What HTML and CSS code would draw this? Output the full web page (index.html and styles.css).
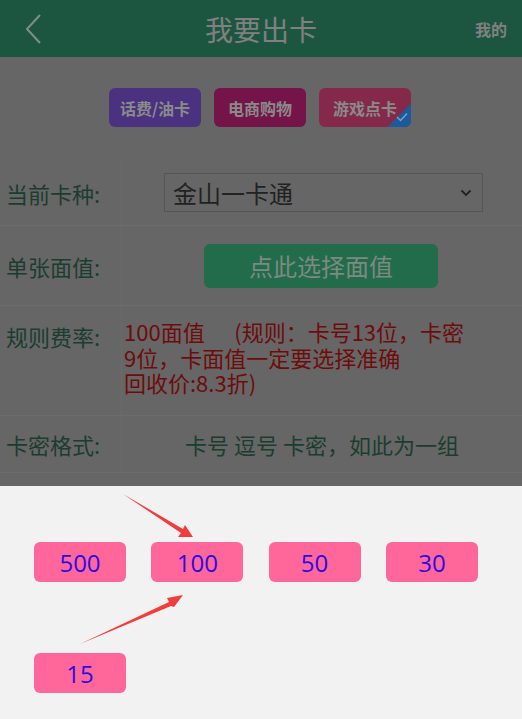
FILE: index.html
```html
<!DOCTYPE html>
<html lang="zh">
<head>
<meta charset="utf-8">
<title>我要出卡</title>
<link rel="stylesheet" href="styles.css">
</head>
<body>
<div class="page">
  <header class="topbar">
    <svg class="back" width="18" height="32" viewBox="0 0 18 32"><polyline points="15,2 2,16 15,30" fill="none" stroke="#7d8f86" stroke-width="2"/></svg>
    <h1 class="title">我要出卡</h1>
    <span class="mine">我的</span>
  </header>

  <nav class="tabs">
    <span class="tab tab-purple">话费/油卡</span>
    <span class="tab tab-wine">电商购物</span>
    <span class="tab tab-rose active">游戏点卡
      <span class="corner"><svg width="12" height="10" viewBox="0 0 12 10"><polyline points="1,5 4.5,8.5 11,1.5" fill="none" stroke="#7fa0c4" stroke-width="1.4"/></svg></span>
    </span>
  </nav>

  <div class="form">
    <div class="row row-type">
      <div class="label">当前卡种:</div>
      <div class="value">
        <div class="select"><span>金山一卡通</span>
          <svg width="12" height="8" viewBox="0 0 12 8"><polyline points="1.5,1.5 6,6 10.5,1.5" fill="none" stroke="#222" stroke-width="1.8"/></svg>
        </div>
      </div>
    </div>
    <div class="row row-face">
      <div class="label">单张面值:</div>
      <div class="value"><button class="pick">点此选择面值</button></div>
    </div>
    <div class="row row-rule">
      <div class="label">规则费率:</div>
      <div class="value rule">100面值&nbsp;&nbsp;&nbsp;&nbsp;&nbsp;&nbsp;(规则：卡号13位，卡密<br>9位，卡面值一定要选择准确<br>回收价:8.3折)</div>
    </div>
    <div class="row row-fmt">
      <div class="label">卡密格式:</div>
      <div class="value fmt">卡号 逗号 卡密，如此为一组</div>
    </div>
  </div>
</div>

<div class="sheet">
  <div class="amounts">
    <span class="amt">500</span>
    <span class="amt">100</span>
    <span class="amt">50</span>
    <span class="amt">30</span>
    <span class="amt">15</span>
  </div>
  <svg class="arrows" width="522" height="233" viewBox="0 0 522 233">
    <polygon points="123,8 183,43 185,39 193,51 178,51 181,47" fill="#f23d3d"/>
    <polygon points="80,158 169,116 167,112 183,109 174,121 171,120" fill="#f23d3d"/>
  </svg>
</div>
</body>
</html>
```

FILE: styles.css
```css
* { box-sizing: border-box; }
html, body { margin: 0; padding: 0; }
body {
  width: 522px;
  height: 719px;
  overflow: hidden;
  background: #f2f2f2;
  font-family: "Noto Sans CJK SC", "Noto Sans", sans-serif;
}
.page {
  background: #666666;
  height: 486px;
  overflow: hidden;
}
.topbar {
  height: 58px;
  background: #1d5640;
  display: flex;
  align-items: center;
  position: relative;
  border-bottom: 1px solid #5d6a64;
}
.back { margin-left: 25px; }
.title {
  position: absolute;
  left: 0; right: 0;
  margin: 0;
  text-align: center;
  font-size: 28px;
  font-weight: 400;
  color: #808080;
  line-height: 56px;
  pointer-events: none;
}
.mine {
  margin-left: auto;
  margin-right: 15px;
  font-size: 16px;
  font-weight: 700;
  color: #818181;
}
.tabs {
  display: flex;
  justify-content: center;
  gap: 13px;
  padding: 30px 0 0 0;
  height: 102px;
  margin-left: -2px;
}
.tab {
  position: relative;
  width: 92px;
  height: 39px;
  border-radius: 6px;
  display: flex;
  align-items: center;
  justify-content: center;
  font-size: 16px;
  font-weight: 700;
  color: #8a8a8a;
  overflow: hidden;
}
.tab-purple { background: #4a3280; }
.tab-wine { background: #741449; }
.tab-rose { background: #85294a; }
.corner {
  position: absolute;
  right: 0; bottom: 0;
  width: 24px; height: 24px;
  background: linear-gradient(135deg, transparent 50%, #1d5a9c 50%);
  display: flex;
  align-items: flex-end;
  justify-content: flex-end;
  padding: 0 3px 5px 0;
}
.form { display: flex; flex-direction: column; }
.row {
  display: flex;
  border-bottom: 1px solid #6c6c6c;
}
.label {
  width: 122px;
  flex: none;
  padding-left: 6px;
  font-size: 22px;
  color: #1b3d30;
  display: flex;
  align-items: center;
  border-right: 1px solid #6a6a6a;
}
.value { flex: 1; display: flex; align-items: center; }
.row-type { height: 66px; }
.row-type .value { padding-left: 42px; }
.select {
  width: 319px;
  height: 39px;
  border: 1px solid #555;
  display: flex;
  align-items: center;
  justify-content: space-between;
  padding: 0 10px 0 8px;
  font-size: 24px;
  color: #222;
}
.row-face { height: 80px; }
.row-face .value { justify-content: center; padding-right: 2px; }
.pick {
  width: 234px;
  height: 44px;
  border: 0;
  border-radius: 6px;
  background: #236c4b;
  color: #7b8a83;
  font-family: inherit;
  font-size: 24px;
  padding: 0;
}
.row-rule { height: 110px; }
.row-rule .label { align-items: flex-start; padding-top: 14px; }
.rule {
  align-items: flex-start;
  padding: 13px 0 0 2px;
  font-size: 22px;
  line-height: 25.5px;
  color: #6e0c0c;
}
.row-fmt { height: 57px; }
.fmt {
  justify-content: center;
  font-size: 22px;
  color: #1b3d30;
}
.sheet {
  position: relative;
  height: 233px;
}
.amounts {
  display: grid;
  grid-template-columns: repeat(4, 92px);
  column-gap: 25.3px;
  row-gap: 71px;
  padding: 56px 0 0 34px;
}
.amt {
  height: 40px;
  background: #ff6699;
  border-radius: 6px;
  display: flex;
  align-items: center;
  justify-content: center;
  font-family: "Open Sans", "Noto Sans", sans-serif;
  font-size: 24px;
  color: #2a0ce6;
}
.arrows {
  position: absolute;
  left: 0; top: 0;
  pointer-events: none;
}
```
